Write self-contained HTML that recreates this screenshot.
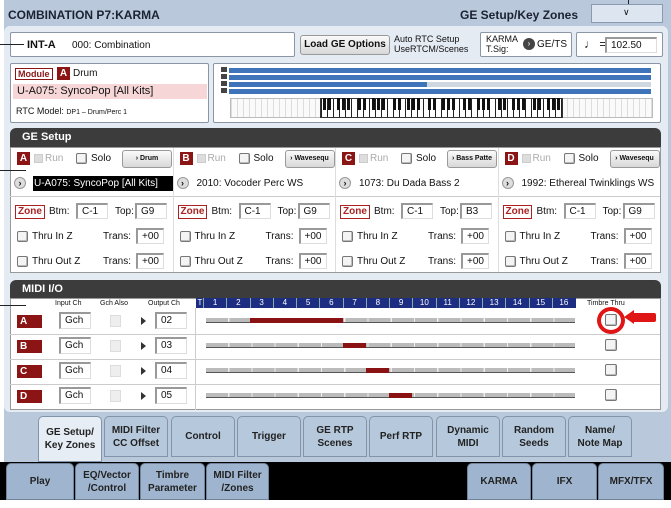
<!DOCTYPE html>
<html><head><meta charset="utf-8"><style>
*{margin:0;padding:0;box-sizing:border-box}
body{width:671px;height:508px;overflow:hidden;background:#fff;font-family:"Liberation Sans",sans-serif;font-size:10px;color:#111;position:relative}
.a{position:absolute}
.box{position:absolute;background:#fff;border:1px solid #8a96a4;border-radius:2px}
.fld{position:absolute;background:#fff;border-top:2px solid #999;border-left:2px solid #999;border-right:1px solid #ddd;border-bottom:1px solid #ddd;font-size:10px;padding-left:4px;line-height:14px}
.hdr{position:absolute;background:#3c3c3c;color:#fff;font-weight:bold;font-size:11px;padding-left:12px;border-radius:6px 6px 0 0}
.lt{position:absolute;background:#8b1515;color:#fff;font-weight:bold;font-size:10px;text-align:center;line-height:13px;width:13px;height:13px}
.cb{position:absolute;width:11px;height:11px;border:1px solid #777;background:#f4f4f4;border-radius:2px;box-shadow:inset -1px -1px 0 #bbb}
.btn{position:absolute;background:linear-gradient(#fafafa,#d8d8d8);border:1px solid #999;border-radius:3px;font-size:8px;font-weight:bold;text-align:center;line-height:16px}
.zone{position:absolute;border:1px solid #a22;color:#a22;font-weight:bold;font-size:10px;padding:0 2px;line-height:12px;background:#fff}
.tab{position:absolute;background:#b6c8dc;border:1px solid #8294a8;border-radius:5px 5px 0 0;font-size:10px;font-weight:bold;color:#222;text-align:center;display:flex;align-items:center;justify-content:center;line-height:13px}
.btab{position:absolute;background:#9fb5cf;border:1px solid #70849c;border-radius:5px 5px 0 0;font-size:10px;font-weight:bold;color:#222;text-align:center;display:flex;align-items:center;justify-content:center;line-height:13px}
.rl{position:absolute;left:10px;width:650px;height:1px;background:#ccc}
</style></head><body>
<!-- main frame -->
<div class="a" style="left:4px;top:0;width:667px;height:508px;background:#b9c9db"></div>
<div class="a" style="left:0;top:44px;width:26px;height:1px;background:#222"></div>
<div class="a" style="left:628px;top:0;width:1px;height:10px;background:#222"></div>
<div class="a" style="left:8px;top:8px;font-weight:bold;font-size:12px;color:#1a2233">COMBINATION P7:KARMA</div>
<div class="a" style="left:460px;top:8px;font-weight:bold;font-size:12px;color:#1a2233">GE Setup/Key Zones</div>
<div class="a" style="left:591px;top:4px;width:72px;height:19px;background:#dde6f0;border:1px solid #8a9ab0"></div>
<div class="a" style="left:623px;top:7px;font-size:9px">∨</div>
<div class="a" style="left:4px;top:26px;width:664px;height:386px;background:#e4ebf3;border-radius:6px"></div>

<div class="box" style="left:10px;top:32px;width:285px;height:25px"></div>
<div class="a" style="left:27px;top:39px;font-weight:bold;font-size:11px">INT-A</div>
<div class="a" style="left:72px;top:40px">000: Combination</div>
<div class="a" style="left:0;top:44px;width:24px;height:1px;background:#222"></div>
<div class="btn" style="left:300px;top:35px;width:90px;height:20px;font-size:10px;line-height:18px">Load GE Options</div>
<div class="a" style="left:394px;top:34px;font-size:9px;line-height:10px">Auto RTC Setup<br>UseRTCM/Scenes</div>
<div class="box" style="left:480px;top:32px;width:92px;height:25px"></div>
<div class="a" style="left:486px;top:34px;font-size:9px;line-height:10px">KARMA<br>T.Sig:</div>
<div class="a" style="left:523px;top:38px;width:12px;height:12px;border-radius:50%;background:#444;color:#fff;font-size:8px;text-align:center;line-height:12px">›</div>
<div class="a" style="left:537px;top:39px;font-size:10px">GE/TS</div>
<div class="box" style="left:576px;top:32px;width:87px;height:25px"></div>
<div class="a" style="left:584px;top:37px;font-size:12px">♩ =</div>
<div class="fld" style="left:605px;top:37px;width:52px;height:16px">102.50</div>

<div class="box" style="left:10px;top:63px;width:199px;height:60px"></div>
<div class="a" style="left:15px;top:68px;border:1px solid #8b1515;color:#8b1515;font-weight:bold;font-size:9px;padding:0 2px;line-height:10px">Module</div>
<div class="lt" style="left:57px;top:67px">A</div>
<div class="a" style="left:73px;top:68px">Drum</div>
<div class="a" style="left:13px;top:84px;width:194px;height:15px;background:#f6d6d6"></div>
<div class="a" style="left:17px;top:85px;font-size:11px">U-A075: SyncoPop [All Kits]</div>
<div class="a" style="left:16px;top:106px;font-size:9px">RTC Model: <span style="font-size:7px">DP1 – Drum/Perc 1</span></div>

<div class="box" style="left:213px;top:63px;width:448px;height:60px"></div>
<div class="a" style="left:221px;top:67px;width:6px;height:27px;background:repeating-linear-gradient(#444 0 5px,transparent 5px 7px)"></div>
<div class="a" style="left:229px;top:68px;width:422px;height:5px;background:#3f74bb"></div>
<div class="a" style="left:229px;top:75px;width:422px;height:5px;background:#3f74bb"></div>
<div class="a" style="left:229px;top:82px;width:422px;height:5px;background:#cfd8e0"></div>
<div class="a" style="left:229px;top:82px;width:198px;height:5px;background:#3f74bb"></div>
<div class="a" style="left:229px;top:89px;width:422px;height:5px;background:#3f74bb"></div>
<div class="a" style="left:230px;top:98px;width:423px;height:20px;background:repeating-linear-gradient(90deg,#ddd 0 1px,#fafafa 1px 6px);border:1px solid #bbb"></div>
<div class="a" style="left:320px;top:98px;width:243px;height:20px;background:repeating-linear-gradient(90deg,#222 0 1px,#fff 1px 6px);border:1px solid #333"></div>
<div class="a" style="left:320px;top:98px;width:243px;height:12px;background:repeating-linear-gradient(90deg,transparent 0 3px,#111 3px 6px,transparent 6px 8px,#111 8px 11px,transparent 11px 17px,#111 17px 20px,transparent 20px 22px,#111 22px 25px,transparent 25px 27px,#111 27px 30px,transparent 30px 35px)"></div>

<!-- GE Setup -->
<div class="hdr" style="left:10px;top:128px;width:651px;height:19px;line-height:19px">GE Setup</div>
<div class="a" style="left:10px;top:147px;width:651px;height:126px;background:#fff;border:1px solid #999"></div>
<div class="a" style="left:0;top:170px;width:26px;height:1px;background:#222"></div>
<div class="rl" style="top:196px"></div>

<div id="ge"></div>

<!-- MIDI I/O -->
<div class="hdr" style="left:10px;top:280px;width:651px;height:18px;line-height:18px">MIDI I/O</div>
<div class="a" style="left:10px;top:298px;width:651px;height:112px;background:#fff;border:1px solid #999"></div>
<div class="a" style="left:0;top:305px;width:26px;height:1px;background:#222"></div>
<div class="a" style="left:55px;top:300px;font-size:7px">Input Ch</div>
<div class="a" style="left:100px;top:300px;font-size:7px">Gch Also</div>
<div class="a" style="left:148px;top:300px;font-size:7px">Output Ch</div>
<div class="a" style="left:196px;top:298px;width:380px;height:10px;background:#1d2e82;color:#fff;font-size:8px;display:flex">
<span style="width:8px;text-align:center">T</span>
</div>
<div class="a" style="left:587px;top:300px;font-size:7px">Timbre Thru</div>
<div class="a" style="left:195px;top:308px;width:1px;height:102px;background:#ccc"></div>

<div class="a" style="left:597px;top:307px;width:28px;height:27px;border:4px solid #e01515;border-radius:50%"></div>
<div class="a" style="left:632px;top:313px;width:24px;height:9px;background:#e01515;border-radius:2px"></div>
<div class="a" style="left:624px;top:310px;width:0;height:0;border-top:7px solid transparent;border-bottom:7px solid transparent;border-right:10px solid #e01515"></div>

<div id="mr"></div>

<!-- tabs -->
<div class="tab" style="left:38px;top:416px;width:64px;height:46px;background:#e6edf5">GE Setup/<br>Key Zones</div>
<div class="tab" style="left:104px;top:416px;width:64px;height:41px">MIDI Filter<br>CC Offset</div>
<div class="tab" style="left:171px;top:416px;width:64px;height:41px">Control</div>
<div class="tab" style="left:237px;top:416px;width:64px;height:41px">Trigger</div>
<div class="tab" style="left:303px;top:416px;width:64px;height:41px">GE RTP<br>Scenes</div>
<div class="tab" style="left:369px;top:416px;width:64px;height:41px">Perf RTP</div>
<div class="tab" style="left:436px;top:416px;width:64px;height:41px">Dynamic<br>MIDI</div>
<div class="tab" style="left:502px;top:416px;width:64px;height:41px">Random<br>Seeds</div>
<div class="tab" style="left:568px;top:416px;width:64px;height:41px">Name/<br>Note Map</div>

<div class="a" style="left:0;top:462px;width:671px;height:46px;background:#000"></div>
<div class="a" style="left:0;top:500px;width:671px;height:8px;background:#fff"></div>
<div class="btab" style="left:6px;top:463px;width:68px;height:37px">Play</div>
<div class="btab" style="left:75px;top:463px;width:64px;height:37px">EQ/Vector<br>/Control</div>
<div class="btab" style="left:140px;top:463px;width:65px;height:37px">Timbre<br>Parameter</div>
<div class="btab" style="left:206px;top:463px;width:63px;height:37px">MIDI Filter<br>/Zones</div>
<div class="btab" style="left:467px;top:463px;width:64px;height:37px">KARMA</div>
<div class="btab" style="left:532px;top:463px;width:65px;height:37px">IFX</div>
<div class="btab" style="left:598px;top:463px;width:66px;height:37px">MFX/TFX</div>

<script>
var cols=[["A","Drum","U-A075: SyncoPop [All Kits]","G9",1],["B","Wavesequ","2010: Vocoder Perc WS","G9",0],["C","Bass Patte","1073: Du Dada Bass 2","B3",0],["D","Wavesequ","1992: Ethereal Twinklings WS","G9",0]];
var h="";
cols.forEach(function(c,i){var x=10+i*162.5;
if(i>0)h+='<div class="a" style="left:'+(x)+'px;top:148px;width:1px;height:124px;background:#ddd"></div>';
h+='<div class="lt" style="left:'+(x+7)+'px;top:152px">'+c[0]+'</div>';
h+='<div class="a" style="left:'+(x+24)+'px;top:154px;width:9px;height:9px;background:#ddd;border:1px solid #ccc"></div><div class="a" style="left:'+(x+35)+'px;top:153px;color:#aaa">Run</div>';
h+='<div class="cb" style="left:'+(x+66)+'px;top:153px"></div><div class="a" style="left:'+(x+81)+'px;top:153px">Solo</div>';
h+='<div class="btn" style="left:'+(x+112)+'px;top:150px;width:50px;height:18px;font-size:7px">› '+c[1]+'</div>';
h+='<div class="a" style="left:'+(x+4)+'px;top:177px;width:12px;height:12px;border-radius:50%;background:#ddd;border:1px solid #999;font-size:9px;text-align:center;line-height:10px;font-weight:bold">›</div>';
if(c[4])h+='<div class="a" style="left:33px;top:176px;width:140px;height:15px;background:#000"></div>';
h+='<div class="a" style="left:'+(x+24)+'px;top:178px;font-size:10px;'+(c[4]?'color:#fff':'')+'">'+c[2]+'</div>';
h+='<div class="zone" style="left:'+(x+5)+'px;top:205px">Zone</div><div class="a" style="left:'+(x+39)+'px;top:206px">Btm:</div><div class="fld" style="left:'+(x+66)+'px;top:203px;width:32px;height:16px">C-1</div>';
h+='<div class="a" style="left:'+(x+105)+'px;top:206px">Top:</div><div class="fld" style="left:'+(x+125)+'px;top:203px;width:32px;height:16px">'+c[3]+'</div>';
h+='<div class="cb" style="left:'+(x+7)+'px;top:231px"></div><div class="a" style="left:'+(x+22)+'px;top:231px">Thru In Z</div><div class="a" style="left:'+(x+93)+'px;top:231px">Trans:</div><div class="fld" style="left:'+(x+126)+'px;top:228px;width:28px;height:16px">+00</div>';
h+='<div class="cb" style="left:'+(x+7)+'px;top:256px"></div><div class="a" style="left:'+(x+22)+'px;top:256px">Thru Out Z</div><div class="a" style="left:'+(x+93)+'px;top:256px">Trans:</div><div class="fld" style="left:'+(x+126)+'px;top:253px;width:28px;height:16px">+00</div>';
});
document.getElementById("ge").outerHTML=h;
var m="",hd="";
for(var k=1;k<=16;k++)hd+='<div class="a" style="left:'+(203+(k-1)*23.25)+'px;top:298px;width:23.25px;height:10px;border-left:1px solid #8aa;color:#fff;font-size:8px;text-align:center;line-height:10px">'+k+'</div>';
var reds=[[3,6],[7,7],[8,8],[9,9]];
["A","B","C","D"].forEach(function(l,i){var y=309+i*25;
if(i>0)m+='<div class="rl" style="top:'+(y)+'px"></div>';
m+='<div class="a" style="left:17px;top:'+(y+6)+'px;width:25px;height:13px;background:#8b1515;color:#fff;font-weight:bold;padding-left:3px;line-height:13px">'+l+'</div>';
m+='<div class="fld" style="left:59px;top:'+(y+3)+'px;width:32px;height:17px">Gch</div>';
m+='<div class="a" style="left:110px;top:'+(y+6)+'px;width:11px;height:12px;background:#eee;border:1px solid #ddd"></div>';
m+='<div class="a" style="left:141px;top:'+(y+8)+'px;border-top:4px solid transparent;border-bottom:4px solid transparent;border-left:5px solid #333"></div>';
m+='<div class="fld" style="left:155px;top:'+(y+3)+'px;width:32px;height:17px">0'+(i+2)+'</div>';
m+='<div class="a" style="left:206px;top:'+(y+9)+'px;width:369px;height:5px;background:repeating-linear-gradient(90deg,#bbb 0 22px,#eee 22px 23.25px);border-bottom:1px solid #555"></div>';
var r=reds[i];m+='<div class="a" style="left:'+(203+(r[0]-1)*23.25)+'px;top:'+(y+9)+'px;width:'+((r[1]-r[0]+1)*23.25)+'px;height:5px;background:#8b1212"></div>';
m+='<div class="cb" style="left:605px;top:'+(y+5)+'px;width:12px;height:12px"></div>';
});
document.getElementById("mr").outerHTML=hd+m;
</script>
</body></html>
